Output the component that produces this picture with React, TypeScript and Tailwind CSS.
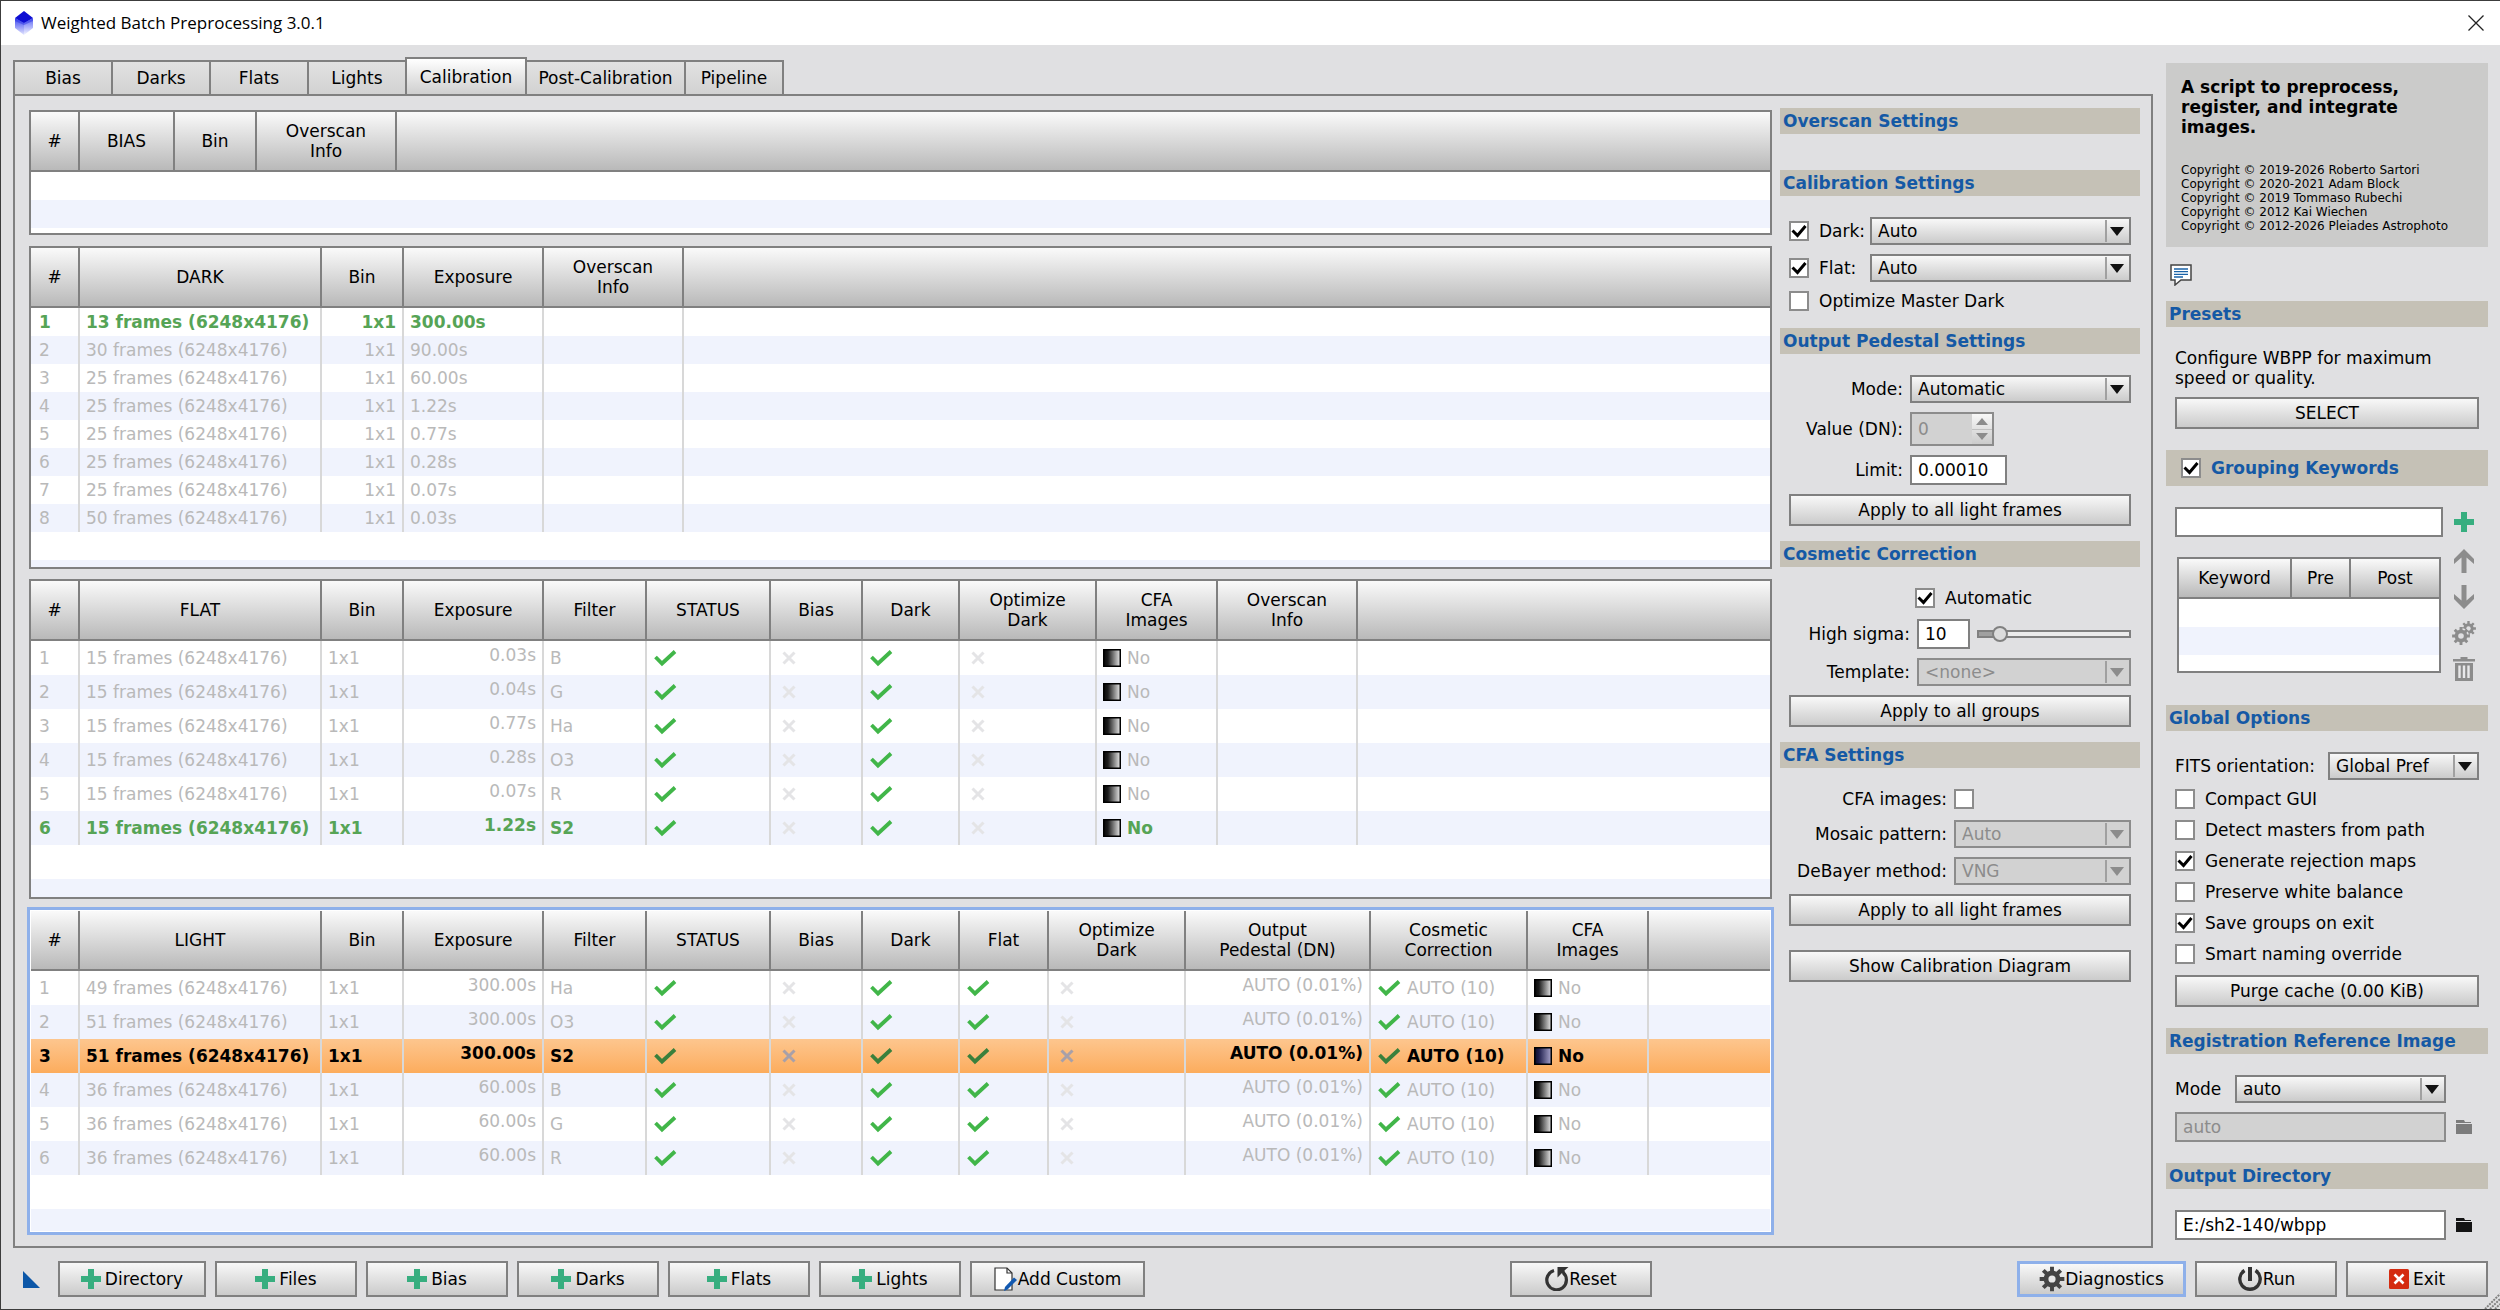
import React from 'react';
import clsx from 'clsx';

type CellKind = 'text' | 'right' | 'rightTop' | 'flag' | 'cfa' | 'cosmetic';

type Column = {
  label: string;
  width: string;
  kind: CellKind;
};

type Row = {
  cells: string[];
  state?: 'active' | 'selected';
};

const GRADIENT = 'bg-linear-to-b from-[#f8f8f8] to-[#cbcbcb]';

/* ---------- icons ---------- */

const LogoIcon = () => (
  <svg viewBox="0 0 18 24" className="w-[18px] h-6" aria-hidden="true">
    <defs>
      <linearGradient id="logo-left" x1="0" y1="0" x2="0" y2="1">
        <stop offset="0" stopColor="#3a44ee" />
        <stop offset="1" stopColor="#e4e6ff" />
      </linearGradient>
      <linearGradient id="logo-right" x1="0" y1="0" x2="0" y2="1">
        <stop offset="0" stopColor="#5a64f4" />
        <stop offset="1" stopColor="#f6f7ff" />
      </linearGradient>
    </defs>
    <path d="M9 0 L18 7 L9 13 L0 7 Z" fill="#0d0dd2" />
    <path d="M0 7 L9 12 V24 L0 17 Z" fill="url(#logo-left)" />
    <path d="M18 7 L9 12 V24 L18 17 Z" fill="url(#logo-right)" />
    <path d="M0 7 L9 12 L18 7 L18 10 L9 14 L0 10 Z" fill="#2c34e6" opacity="0.5" />
  </svg>
);

const CheckIcon = ({ dark }: { dark?: boolean }) => (
  <svg viewBox="0 0 24 18" className="w-6 h-[18px] shrink-0" role="img" aria-label="yes">
    <path d="M2.5 8 L9 14.500 L22 2.500" fill="none" stroke={dark ? '#3a803c' : '#41b649'} strokeWidth="3.8" />
  </svg>
);

const CrossIcon = ({ dark }: { dark?: boolean }) => (
  <svg viewBox="0 0 24 18" className="w-6 h-[18px] shrink-0" role="img" aria-label="no">
    <path d="M6.500 3.500 L17.500 14.500 M17.500 3.500 L6.500 14.500" fill="none" stroke={dark ? '#a8a0a8' : '#e4e4e6'} strokeWidth="3" />
  </svg>
);

const CfaIcon = ({ dark }: { dark?: boolean }) => (
  <svg viewBox="0 0 18 18" className="w-[18px] h-[18px] shrink-0" aria-hidden="true">
    <defs>
      <linearGradient id="cfa">
        <stop offset="0" stopColor="#080808" />
        <stop offset="0.25" stopColor="#1c1c1c" />
        <stop offset="1" stopColor="#e8e8e8" />
      </linearGradient>
      <linearGradient id="cfa-dark">
        <stop offset="0" stopColor="#0c0c28" />
        <stop offset="0.25" stopColor="#1e1e4c" />
        <stop offset="1" stopColor="#a8a4cc" />
      </linearGradient>
    </defs>
    <rect x="0.750" y="0.750" width="16.500" height="16.500" fill={dark ? 'url(#cfa-dark)' : 'url(#cfa)'} stroke="#000" strokeWidth="1.500" />
  </svg>
);

const PlusIcon = () => (
  <svg viewBox="0 0 20 20" className="w-5 h-5" aria-hidden="true">
    <path d="M7 0 H13 V7 H20 V13 H13 V20 H7 V13 H0 V7 H7 Z" fill="#37ae7f" />
  </svg>
);

const ArrowIcon = ({ down }: { down?: boolean }) => (
  <svg viewBox="0 0 22 24" className={clsx('w-[22px] h-6', down && 'rotate-180')} aria-hidden="true">
    <path d="M11 0 L21 10 V15 L13.500 8.500 V24 H8.500 V8.500 L1 15 V10 Z" fill="#8c8c8c" />
  </svg>
);

const gearPath = (cx: number, cy: number, outer: number, inner: number, teeth: number) => {
  const points: string[] = [];
  const step = (Math.PI * 2) / teeth;
  for (let i = 0; i < teeth; i++) {
    const a = i * step - Math.PI / 2;
    [
      [inner, -0.3],
      [outer, -0.2],
      [outer, 0.2],
      [inner, 0.3],
    ].forEach(([r, o]) => {
      points.push(`${(cx + r * Math.cos(a + o * step)).toFixed(2)} ${(cy + r * Math.sin(a + o * step)).toFixed(2)}`);
    });
  }
  return `M${points.join(' L')} Z`;
};

const GearIcon = () => (
  <svg viewBox="0 0 26 26" className="w-[26px] h-[26px]" aria-hidden="true">
    <path d={gearPath(13, 13, 12.5, 8.4, 8)} fill="#444" />
    <circle cx="13" cy="13" r="3.6" fill="#e8e8e8" />
  </svg>
);

const GearsIcon = () => (
  <svg viewBox="0 0 24 24" className="w-6 h-6" aria-hidden="true">
    <path d={gearPath(16.5, 7.5, 7.5, 5.2, 8)} fill="#8c8c8c" />
    <circle cx="16.500" cy="7.500" r="2.200" fill="#e0e0e2" />
    <circle cx="9" cy="15" r="8" fill="#e0e0e2" />
    <path d={gearPath(9, 15, 9, 6.4, 8)} fill="#8c8c8c" />
    <circle cx="9" cy="15" r="2.800" fill="#e0e0e2" />
  </svg>
);

const TrashIcon = () => (
  <svg viewBox="0 0 22 24" className="w-[22px] h-6" aria-hidden="true">
    <path d="M0 2 H7.500 V0 H14.500 V2 H22 V4.500 H0 Z" fill="#8c8c8c" />
    <path d="M2 6 H20 V24 H2 Z" fill="#8c8c8c" />
    <path d="M6.500 8.500 V21 M11 8.500 V21 M15.500 8.500 V21" stroke="#e8e8ea" strokeWidth="2.400" />
  </svg>
);

const FolderIcon = ({ muted }: { muted?: boolean }) => (
  <svg viewBox="0 0 16 14" className="w-4 h-[14px]" aria-hidden="true">
    <path d="M0 0 H8 L9 2 H15 V3 H0 Z M0 4 H16 V14 H0 Z" fill={muted ? '#7c7c7c' : '#141414'} />
  </svg>
);

const CommentIcon = () => (
  <svg viewBox="0 0 22 22" className="w-[22px] h-[22px]" aria-hidden="true">
    <path d="M1 1 H21 V16 H11 L5 21 V16 H1 Z" fill="#fff" stroke="#444" strokeWidth="1.500" />
    <path d="M4 5 H18 M4 7.700 H18 M4 10.400 H18 M4 13 H13" stroke="#1b63a8" strokeWidth="1.300" />
  </svg>
);

const DocumentIcon = () => (
  <svg viewBox="0 0 24 24" className="w-6 h-6" aria-hidden="true">
    <path d="M1 1 H13 L18 6 V23 H1 Z" fill="#fff" stroke="#333" strokeWidth="1.200" />
    <path d="M13 1 V6 H18" fill="none" stroke="#333" strokeWidth="1.200" />
    <path d="M20 10.500 L23 13 L13.500 22.500 L10 24 L11 20 Z" fill="#1259b0" />
  </svg>
);

const ResetIcon = () => (
  <svg viewBox="0 0 24 24" className="w-6 h-6" aria-hidden="true">
    <path d="M9 3.500 A9.800 9.800 0 1 0 18 5.500" fill="none" stroke="#333" strokeWidth="3.200" />
    <path d="M12.500 0 H23.500 L19.500 3.500 L20 7 L17 6 L12.500 10.500 Z" fill="#333" />
  </svg>
);

const PowerIcon = () => (
  <svg viewBox="0 0 26 24" className="w-[26px] h-6" aria-hidden="true">
    <path d="M7.500 3.500 A10.200 10.200 0 1 0 18.500 3.500" fill="none" stroke="#333" strokeWidth="3.400" />
    <path d="M13 0 V14" stroke="#333" strokeWidth="4" />
  </svg>
);

const ExitIcon = () => (
  <svg viewBox="0 0 20 20" className="w-5 h-5" aria-hidden="true">
    <rect width="20" height="20" rx="1.500" fill="#d42c10" />
    <path d="M5.500 5.500 L14.500 14.500 M14.500 5.500 L5.500 14.500" stroke="#fff" strokeWidth="2.600" />
  </svg>
);

/* ---------- form controls ---------- */

type ButtonProps = React.ButtonHTMLAttributes<HTMLButtonElement> & { focused?: boolean };

const Button = ({ focused, className, children, ...rest }: ButtonProps) => (
  <button
    type="button"
    className={clsx(
      'flex items-center justify-center whitespace-nowrap',
      GRADIENT,
      focused ? 'border-3 border-[#8eb0ea]' : 'border-2 border-[#808080]',
      className
    )}
    {...rest}
  >
    {children}
  </button>
);

const Checkbox = ({ id, label, checked }: { id: string; label?: string; checked?: boolean }) => (
  <span className="flex items-center gap-2.5">
    <span className="grid shrink-0">
      <input
        id={id}
        type="checkbox"
        defaultChecked={checked}
        className="peer col-start-1 row-start-1 appearance-none w-5 h-5 bg-white border-2 border-[#8c8c8c]"
      />
      <svg
        viewBox="0 0 20 20"
        className="col-start-1 row-start-1 w-5 h-5 pointer-events-none invisible peer-checked:visible"
        aria-hidden="true"
      >
        <path d="M3.500 9.500 L8.500 14.500 L16.500 5" fill="none" stroke="#000" strokeWidth="3" />
      </svg>
    </span>
    {label && <label htmlFor={id}>{label}</label>}
  </span>
);

type SelectProps = { id: string; value: string; disabled?: boolean; className?: string };

const Select = ({ id, value, disabled, className }: SelectProps) => (
  <span
    className={clsx(
      'grid h-7 border-2 min-w-0',
      disabled ? 'bg-[#d2d2d2] border-[#8c8c8c] text-[#8c8c8c]' : [GRADIENT, 'border-[#808080]'],
      className
    )}
  >
    <select
      id={id}
      disabled={disabled}
      className="col-start-1 row-start-1 w-full h-full appearance-none bg-transparent pl-1.5 pr-7 leading-5 outline-none"
    >
      <option>{value}</option>
    </select>
    <span className="col-start-1 row-start-1 justify-self-end flex items-center justify-center w-6 my-px pr-0.5 border-l-2 border-[#a0a0a0] pointer-events-none">
      <svg viewBox="0 0 14 9" className="w-[14px] h-[9px]" aria-hidden="true">
        <path d="M0 0 H14 L7 9 Z" fill={disabled ? '#8c8c8c' : '#111'} />
      </svg>
    </span>
  </span>
);

const TextInput = ({ className, ...rest }: React.InputHTMLAttributes<HTMLInputElement>) => (
  <input
    type="text"
    className={clsx(
      'h-[30px] min-w-0 border-2 border-[#808080] bg-white px-1.5 outline-none disabled:bg-[#d2d2d2] disabled:border-[#8c8c8c] disabled:text-[#8c8c8c]',
      className
    )}
    {...rest}
  />
);

const SectionTitle = ({ children }: { children: React.ReactNode }) => (
  <h2 className="h-[26px] px-[3px] leading-[26px] font-bold text-[#1559a5] bg-[#c5c1b6] whitespace-nowrap">{children}</h2>
);

const Field = ({ id, label, width, children }: { id: string; label: string; width: string; children: React.ReactNode }) => (
  <div className="flex items-center gap-[7px]">
    <label htmlFor={id} className={clsx('shrink-0 text-right', width)}>
      {label}
    </label>
    {children}
  </div>
);

/* ---------- frame tables ---------- */

const CellContent = ({ kind, value, dark }: { kind: CellKind; value: string; dark: boolean }) => {
  if (kind === 'flag') {
    return value === 'y' ? <CheckIcon dark={dark} /> : <CrossIcon dark={dark} />;
  }
  if (kind === 'cfa') {
    return (
      <span className="flex items-center gap-1.5">
        <CfaIcon dark={dark} />
        {value}
      </span>
    );
  }
  if (kind === 'cosmetic') {
    return (
      <span className="flex items-center gap-1.5">
        <CheckIcon dark={dark} />
        {value}
      </span>
    );
  }
  return <>{value}</>;
};

type FrameTableProps = {
  columns: Column[];
  rows: Row[];
  tall?: boolean;
  focused?: boolean;
  className?: string;
};

const FrameTable = ({ columns, rows, tall, focused, className }: FrameTableProps) => (
  <div
    className={clsx(
      'flex flex-col bg-white',
      focused ? 'border-3 border-[#8eb0ea] p-px' : 'mx-0.5 border-2 border-[#808080]',
      className
    )}
  >
    <table className="w-full table-fixed border-separate border-spacing-0">
      <thead>
        <tr className="h-[60px]">
          {columns.map((col, i) => (
            <th
              key={i}
              className={clsx(
                'p-0 font-normal leading-5 whitespace-pre-line bg-linear-to-b from-[#fafafa] to-[#b9b9b9] border-r-2 border-b-2 border-[#808080]',
                col.width
              )}
            >
              {col.label}
            </th>
          ))}
          <th className="p-0 bg-linear-to-b from-[#fafafa] to-[#b9b9b9] border-b-2 border-[#808080]" />
        </tr>
      </thead>
      <tbody>
        {rows.map((row, r) => {
          const selected = row.state === 'selected';
          return (
            <tr
              key={r}
              className={clsx(
                tall ? 'h-[34px]' : 'h-7',
                selected
                  ? 'bg-linear-to-b from-[#fdc68e] to-[#fcac5c] text-black font-bold'
                  : [
                      r % 2 ? 'bg-[#f0f3fd]' : 'bg-white',
                      row.state === 'active' ? 'text-[#56a456] font-bold' : 'text-[#b9b9b9]',
                    ]
              )}
            >
              {columns.map((col, c) => (
                <td
                  key={c}
                  className={clsx(
                    'py-0 leading-5 whitespace-nowrap border-r-2 border-[#d8d8d8]',
                    c === 0 ? 'pl-2' : 'pl-1.5',
                    col.kind === 'right' && 'pr-1.5 text-right',
                    col.kind === 'rightTop' && 'pr-1.5 pt-1 text-right align-top'
                  )}
                >
                  {row.cells[c] && <CellContent kind={col.kind} value={row.cells[c]} dark={selected} />}
                </td>
              ))}
              <td />
            </tr>
          );
        })}
      </tbody>
    </table>
    {/* striped filler under the last row */}
    <div
      className={clsx(
        'flex-1',
        tall
          ? 'bg-[repeating-linear-gradient(to_bottom,#ffffff_0_34px,#f0f3fd_34px_68px)]'
          : 'bg-[repeating-linear-gradient(to_bottom,#ffffff_0_28px,#f0f3fd_28px_56px)]'
      )}
    />
  </div>
);

const SIZE = '(6248x4176)';

const biasColumns: Column[] = [
  { label: '#', width: 'w-[49px]', kind: 'text' },
  { label: 'BIAS', width: 'w-[95px]', kind: 'text' },
  { label: 'Bin', width: 'w-[82px]', kind: 'text' },
  { label: 'Overscan\nInfo', width: 'w-[140px]', kind: 'text' },
];

const darkColumns: Column[] = [
  { label: '#', width: 'w-[49px]', kind: 'text' },
  { label: 'DARK', width: 'w-[242px]', kind: 'text' },
  { label: 'Bin', width: 'w-[82px]', kind: 'right' },
  { label: 'Exposure', width: 'w-[140px]', kind: 'text' },
  { label: 'Overscan\nInfo', width: 'w-[140px]', kind: 'text' },
];

const flatColumns: Column[] = [
  { label: '#', width: 'w-[49px]', kind: 'text' },
  { label: 'FLAT', width: 'w-[242px]', kind: 'text' },
  { label: 'Bin', width: 'w-[82px]', kind: 'text' },
  { label: 'Exposure', width: 'w-[140px]', kind: 'rightTop' },
  { label: 'Filter', width: 'w-[103px]', kind: 'text' },
  { label: 'STATUS', width: 'w-[124px]', kind: 'flag' },
  { label: 'Bias', width: 'w-[92px]', kind: 'flag' },
  { label: 'Dark', width: 'w-[97px]', kind: 'flag' },
  { label: 'Optimize\nDark', width: 'w-[137px]', kind: 'flag' },
  { label: 'CFA\nImages', width: 'w-[121px]', kind: 'cfa' },
  { label: 'Overscan\nInfo', width: 'w-[140px]', kind: 'text' },
];

const lightColumns: Column[] = [
  { label: '#', width: 'w-[49px]', kind: 'text' },
  { label: 'LIGHT', width: 'w-[242px]', kind: 'text' },
  { label: 'Bin', width: 'w-[82px]', kind: 'text' },
  { label: 'Exposure', width: 'w-[140px]', kind: 'rightTop' },
  { label: 'Filter', width: 'w-[103px]', kind: 'text' },
  { label: 'STATUS', width: 'w-[124px]', kind: 'flag' },
  { label: 'Bias', width: 'w-[92px]', kind: 'flag' },
  { label: 'Dark', width: 'w-[97px]', kind: 'flag' },
  { label: 'Flat', width: 'w-[89px]', kind: 'flag' },
  { label: 'Optimize\nDark', width: 'w-[137px]', kind: 'flag' },
  { label: 'Output\nPedestal (DN)', width: 'w-[185px]', kind: 'rightTop' },
  { label: 'Cosmetic\nCorrection', width: 'w-[157px]', kind: 'cosmetic' },
  { label: 'CFA\nImages', width: 'w-[121px]', kind: 'cfa' },
];

const darkRows: Row[] = [
  [13, '300.00s'],
  [30, '90.00s'],
  [25, '60.00s'],
  [25, '1.22s'],
  [25, '0.77s'],
  [25, '0.28s'],
  [25, '0.07s'],
  [50, '0.03s'],
].map(([frames, exposure], i) => ({
  cells: [`${i + 1}`, `${frames} frames ${SIZE}`, '1x1', `${exposure}`, ''],
  state: i === 0 ? 'active' : undefined,
}));

const flatRows: Row[] = [
  ['0.03s', 'B'],
  ['0.04s', 'G'],
  ['0.77s', 'Ha'],
  ['0.28s', 'O3'],
  ['0.07s', 'R'],
  ['1.22s', 'S2'],
].map(([exposure, filter], i) => ({
  cells: [`${i + 1}`, `15 frames ${SIZE}`, '1x1', exposure, filter, 'y', 'n', 'y', 'n', 'No', ''],
  state: i === 5 ? 'active' : undefined,
}));

const lightRows: Row[] = [
  [49, '300.00s', 'Ha'],
  [51, '300.00s', 'O3'],
  [51, '300.00s', 'S2'],
  [36, '60.00s', 'B'],
  [36, '60.00s', 'G'],
  [36, '60.00s', 'R'],
].map(([frames, exposure, filter], i) => ({
  cells: [
    `${i + 1}`,
    `${frames} frames ${SIZE}`,
    '1x1',
    `${exposure}`,
    `${filter}`,
    'y',
    'n',
    'y',
    'y',
    'n',
    'AUTO (0.01%)',
    'AUTO (10)',
    'No',
  ],
  state: i === 2 ? 'selected' : undefined,
}));

/* ---------- panels ---------- */

const tabs = [
  { label: 'Bias', width: 'w-[100px]' },
  { label: 'Darks', width: 'w-[100px]' },
  { label: 'Flats', width: 'w-[100px]' },
  { label: 'Lights', width: 'w-[100px]' },
  { label: 'Calibration', width: 'w-[122px]' },
  { label: 'Post-Calibration', width: 'w-[161px]' },
  { label: 'Pipeline', width: 'w-[100px]' },
];

const TabBar = () => (
  <div role="tablist" className="flex items-end h-[37px]">
    {tabs.map(({ label, width }) => {
      const active = label === 'Calibration';
      return (
        <button
          key={label}
          type="button"
          role="tab"
          aria-selected={active}
          className={clsx(
            'border-2 border-b-0 border-[#808080] whitespace-nowrap not-first:-ml-0.5',
            width,
            active ? 'h-[37px] bg-linear-to-b from-white to-[#cfcfcf]' : 'h-[34px] bg-linear-to-b from-[#e2e2e2] to-[#d2d2d2]'
          )}
        >
          {label}
        </button>
      );
    })}
  </div>
);

const CalibrationSettings = () => (
  <div className="w-[360px] shrink-0 flex flex-col">
    <SectionTitle>Overscan Settings</SectionTitle>

    <div className="mt-9">
      <SectionTitle>Calibration Settings</SectionTitle>
    </div>
    <div className="flex flex-col gap-[9px] px-[9px] pt-[21px] pb-[17px]">
      <div className="flex items-center">
        <span className="w-[81px] shrink-0">
          <Checkbox id="use-dark" label="Dark:" checked />
        </span>
        <Select id="dark-mode" value="Auto" className="flex-1" />
      </div>
      <div className="flex items-center">
        <span className="w-[81px] shrink-0">
          <Checkbox id="use-flat" label="Flat:" checked />
        </span>
        <Select id="flat-mode" value="Auto" className="flex-1" />
      </div>
      <Checkbox id="optimize-dark" label="Optimize Master Dark" />
    </div>

    <SectionTitle>Output Pedestal Settings</SectionTitle>
    <div className="flex flex-col gap-[9px] px-[9px] pt-[21px] pb-[15px]">
      <Field id="pedestal-mode" label="Mode:" width="w-[114px]">
        <Select id="pedestal-mode" value="Automatic" className="flex-1" />
      </Field>
      <Field id="pedestal-value" label="Value (DN):" width="w-[114px]">
        <span className="flex w-[84px] h-[34px] border-2 border-[#8c8c8c] bg-[#d2d2d2]">
          <input
            id="pedestal-value"
            type="text"
            disabled
            defaultValue="0"
            className="flex-1 min-w-0 pl-1.5 bg-transparent text-[#8c8c8c]"
          />
          <span className={clsx('flex flex-col w-5 text-[#8c8c8c]', GRADIENT)}>
            <button type="button" disabled aria-label="Increase" className="flex-1 flex items-center justify-center">
              <svg viewBox="0 0 12 7" className="w-3 h-[7px]" aria-hidden="true">
                <path d="M0 7 H12 L6 0 Z" fill="currentColor" />
              </svg>
            </button>
            <button
              type="button"
              disabled
              aria-label="Decrease"
              className="flex-1 flex items-center justify-center border-t border-[#c0c0c0]"
            >
              <svg viewBox="0 0 12 7" className="w-3 h-[7px]" aria-hidden="true">
                <path d="M0 0 H12 L6 7 Z" fill="currentColor" />
              </svg>
            </button>
          </span>
        </span>
      </Field>
      <Field id="pedestal-limit" label="Limit:" width="w-[114px]">
        <TextInput id="pedestal-limit" defaultValue="0.00010" className="w-[97px]" />
      </Field>
      <Button className="h-8">Apply to all light frames</Button>
    </div>

    <SectionTitle>Cosmetic Correction</SectionTitle>
    <div className="flex flex-col gap-[9px] px-[9px] pt-[21px] pb-[15px]">
      <div className="pl-[126px] pb-0.5">
        <Checkbox id="cc-automatic" label="Automatic" checked />
      </div>
      <Field id="high-sigma" label="High sigma:" width="w-[121px]">
        <TextInput id="high-sigma" defaultValue="10" className="w-[53px]" />
        <input
          type="range"
          min="0"
          max="50"
          defaultValue="5"
          aria-label="High sigma"
          className="flex-1 min-w-0 h-4 appearance-none bg-transparent [&::-webkit-slider-runnable-track]:h-2 [&::-webkit-slider-runnable-track]:border-2 [&::-webkit-slider-runnable-track]:border-[#808080] [&::-webkit-slider-runnable-track]:bg-[linear-gradient(to_right,#a0a0a0_20px,#ececec_20px)] [&::-webkit-slider-thumb]:appearance-none [&::-webkit-slider-thumb]:-mt-1.5 [&::-webkit-slider-thumb]:w-4 [&::-webkit-slider-thumb]:h-4 [&::-webkit-slider-thumb]:rounded-full [&::-webkit-slider-thumb]:border-2 [&::-webkit-slider-thumb]:border-[#808080] [&::-webkit-slider-thumb]:bg-[#dcdcdc]"
        />
      </Field>
      <Field id="cc-template" label="Template:" width="w-[121px]">
        <Select id="cc-template" value="<none>" disabled className="flex-1" />
      </Field>
      <Button className="h-8">Apply to all groups</Button>
    </div>

    <SectionTitle>CFA Settings</SectionTitle>
    <div className="flex flex-col gap-[9px] px-[9px] pt-[21px]">
      <div className="pb-0.5">
        <Field id="cfa-images" label="CFA images:" width="w-[158px]">
          <Checkbox id="cfa-images" />
        </Field>
      </div>
      <Field id="mosaic" label="Mosaic pattern:" width="w-[158px]">
        <Select id="mosaic" value="Auto" disabled className="flex-1" />
      </Field>
      <Field id="debayer" label="DeBayer method:" width="w-[158px]">
        <Select id="debayer" value="VNG" disabled className="flex-1" />
      </Field>
      <Button className="h-8">Apply to all light frames</Button>
      <Button className="h-8 mt-[15px]">Show Calibration Diagram</Button>
    </div>
  </div>
);

const globalOptions = [
  { id: 'compact-gui', label: 'Compact GUI' },
  { id: 'detect-masters', label: 'Detect masters from path' },
  { id: 'rejection-maps', label: 'Generate rejection maps', checked: true },
  { id: 'white-balance', label: 'Preserve white balance' },
  { id: 'save-groups', label: 'Save groups on exit', checked: true },
  { id: 'smart-naming', label: 'Smart naming override' },
];

const Sidebar = () => (
  <aside className="w-[322px] shrink-0 flex flex-col mt-[6px]">
    <div className="bg-[#cbcbca] px-[15px] py-[14px]">
      <p className="font-bold leading-5">
        A script to preprocess,
        <br />
        register, and integrate
        <br />
        images.
      </p>
      <p className="mt-[26px] text-xs leading-[14px] whitespace-nowrap">
        Copyright © 2019-2026 Roberto Sartori
        <br />
        Copyright © 2020-2021 Adam Block
        <br />
        Copyright © 2019 Tommaso Rubechi
        <br />
        Copyright © 2012 Kai Wiechen
        <br />
        Copyright © 2012-2026 Pleiades Astrophoto
      </p>
    </div>

    <button type="button" aria-label="Show log" className="mt-[17px] mb-[15px] ml-1 self-start">
      <CommentIcon />
    </button>

    <SectionTitle>Presets</SectionTitle>
    <div className="px-[9px] pt-[21px] pb-[21px]">
      <p className="mb-[9px]">
        Configure WBPP for maximum
        <br />
        speed or quality.
      </p>
      <Button className="w-full h-8">SELECT</Button>
    </div>

    <div className="flex items-center h-9 px-[15px] bg-[#c5c1b6] font-bold text-[#1559a5]">
      <Checkbox id="grouping" label="Grouping Keywords" checked />
    </div>
    <div className="flex justify-between pl-[9px] pr-3 pt-[21px] pb-6">
      <div className="w-[268px] flex flex-col gap-5">
        <TextInput aria-label="Keyword" />
        <div className="flex flex-col h-[116px] mx-0.5 border-2 border-[#808080] bg-white">
          <table className="w-full table-fixed border-separate border-spacing-0">
            <thead>
              <tr className="h-10">
                <th className="w-[113px] p-0 font-normal bg-linear-to-b from-[#fafafa] to-[#b9b9b9] border-r-2 border-b-2 border-[#808080]">
                  Keyword
                </th>
                <th className="w-[59px] p-0 font-normal bg-linear-to-b from-[#fafafa] to-[#b9b9b9] border-r-2 border-b-2 border-[#808080]">
                  Pre
                </th>
                <th className="p-0 font-normal bg-linear-to-b from-[#fafafa] to-[#b9b9b9] border-b-2 border-[#808080]">
                  Post
                </th>
              </tr>
            </thead>
          </table>
          <div className="flex-1 bg-[repeating-linear-gradient(to_bottom,#ffffff_0_28px,#f0f3fd_28px_56px)]" />
        </div>
      </div>
      <div className="flex flex-col items-center gap-3">
        <button type="button" aria-label="Add keyword" className="mt-[5px] mb-[5px]">
          <PlusIcon />
        </button>
        <button type="button" aria-label="Move up">
          <ArrowIcon />
        </button>
        <button type="button" aria-label="Move down">
          <ArrowIcon down />
        </button>
        <button type="button" aria-label="Keyword options">
          <GearsIcon />
        </button>
        <button type="button" aria-label="Delete keyword">
          <TrashIcon />
        </button>
      </div>
    </div>

    <SectionTitle>Global Options</SectionTitle>
    <div className="flex flex-col px-[9px] pt-[21px] pb-[21px]">
      <div className="flex items-center justify-between mb-[9px]">
        <label htmlFor="fits">FITS orientation:</label>
        <Select id="fits" value="Global Pref" className="w-[151px]" />
      </div>
      <div className="flex flex-col gap-[11px] mb-[11px]">
        {globalOptions.map((option) => (
          <Checkbox key={option.id} {...option} />
        ))}
      </div>
      <Button className="h-8">Purge cache (0.00 KiB)</Button>
    </div>

    <SectionTitle>Registration Reference Image</SectionTitle>
    <div className="flex flex-col gap-[9px] pl-[9px] pr-4 pt-[21px] pb-[21px]">
      <div className="flex items-center pr-[26px]">
        <label htmlFor="reference-mode" className="w-[60px]">
          Mode
        </label>
        <Select id="reference-mode" value="auto" className="flex-1" />
      </div>
      <div className="flex items-center gap-2.5">
        <TextInput aria-label="Reference image" defaultValue="auto" disabled className="flex-1" />
        <button type="button" disabled aria-label="Browse reference image">
          <FolderIcon muted />
        </button>
      </div>
    </div>

    <SectionTitle>Output Directory</SectionTitle>
    <div className="flex items-center gap-2.5 pl-[9px] pr-4 pt-[21px]">
      <TextInput aria-label="Output directory" defaultValue="E:/sh2-140/wbpp" className="flex-1" />
      <button type="button" aria-label="Browse output directory">
        <FolderIcon />
      </button>
    </div>
  </aside>
);

const Footer = () => (
  <footer className="flex items-center gap-[9px] pt-[13px]">
    <svg viewBox="0 0 17 17" className="w-[17px] h-[17px] ml-2.5 mr-[9px]" aria-hidden="true">
      <path d="M0 0 L17 17 H0 Z" fill="#0c57a8" />
    </svg>
    <Button className="w-[148px] h-9">
      <PlusIcon />
      <span className="ml-1">Directory</span>
    </Button>
    {['Files', 'Bias', 'Darks', 'Flats', 'Lights'].map((label) => (
      <Button key={label} className="w-[142px] h-9">
        <PlusIcon />
        <span className="ml-1">{label}</span>
      </Button>
    ))}
    <Button className="w-[175px] h-9">
      <DocumentIcon />
      Add Custom
    </Button>
    <Button className="w-[142px] h-9 mx-auto">
      <ResetIcon />
      Reset
    </Button>
    <Button focused className="w-[169px] h-9">
      <GearIcon />
      Diagnostics
    </Button>
    <Button className="w-[142px] h-9">
      <PowerIcon />
      Run
    </Button>
    <Button className="w-[142px] h-9">
      <ExitIcon />
      <span className="ml-1">Exit</span>
    </Button>
  </footer>
);

const App = () => (
  <div className="relative flex flex-col min-h-screen border border-[#3c3c3c] border-r-0 bg-[#e0e0e2] text-[17px] leading-5 text-black font-['DejaVu_Sans',sans-serif]">
    <header className="flex items-center justify-between h-11 pl-[14px] pr-4 bg-white font-['Open_Sans',sans-serif]">
      <div className="flex items-center gap-2">
        <LogoIcon />
        <h1>Weighted Batch Preprocessing 3.0.1</h1>
      </div>
      <button type="button" aria-label="Close">
        <svg viewBox="0 0 16 16" className="w-4 h-4" aria-hidden="true">
          <path d="M0.500 0.500 L15.500 15.500 M15.500 0.500 L0.500 15.500" stroke="#222" strokeWidth="1.300" />
        </svg>
      </button>
    </header>

    <div className="flex-1 flex flex-col pl-3 pr-3 pt-3 pb-3">
      <div className="flex-1 flex gap-[13px]">
        <main className="flex-1 min-w-0 flex flex-col">
          <TabBar />
          <div className="flex-1 flex gap-1.5 border-2 border-[#808080] pl-3 pr-[11px] pt-3 pb-[11px]">
            <div className="flex-1 min-w-0 flex flex-col pt-0.5">
              <FrameTable columns={biasColumns} rows={[]} className="h-[125px] mb-[11px]" />
              <FrameTable columns={darkColumns} rows={darkRows} className="h-[323px] mb-2.5" />
              <FrameTable columns={flatColumns} rows={flatRows} tall className="h-[320px] mb-2" />
              <FrameTable columns={lightColumns} rows={lightRows} tall focused className="flex-1" />
            </div>
            <CalibrationSettings />
          </div>
        </main>
        <Sidebar />
      </div>
      <Footer />
    </div>

    {/* resize grip */}
    <svg viewBox="0 0 16 16" className="absolute right-0 bottom-0 w-4 h-4" aria-hidden="true">
      <path d="M1 16 L16 1 M6 16 L16 6 M11 16 L16 11" stroke="#808080" strokeWidth="2" strokeDasharray="2 1" />
    </svg>
  </div>
);

export default App;
